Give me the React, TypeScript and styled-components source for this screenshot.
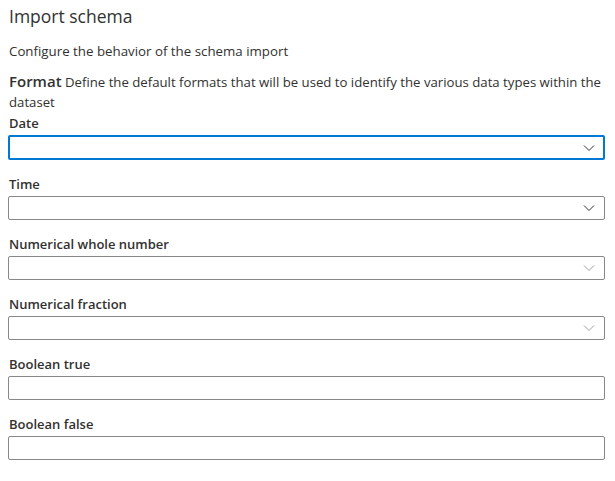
import styled, { createGlobalStyle } from "styled-components";

const GlobalStyle = createGlobalStyle`
  body {
    margin: 0;
    background: #ffffff;
    font-family: "Segoe UI", "Open Sans", "Noto Sans", sans-serif;
    color: #323130;
  }
`;

const Panel = styled.div`
  width: 615px;
  box-sizing: border-box;
  padding: 2px 10px 20px 8px;
`;

const Title = styled.h1`
  margin: 0 0 11px 1px;
  font-size: 17.5px;
  font-weight: 400;
  line-height: 28px;
  color: #323130;
`;

const Description = styled.p`
  margin: 0 0 10px 1px;
  font-size: 13.3px;
  line-height: 20px;
`;

const FormatText = styled.div`
  margin: 0 0 1px 1px;
  font-size: 13.2px;
  line-height: 20px;
`;

const FormatTitle = styled.span`
  font-size: 15px;
  font-weight: 600;
  line-height: 20px;
`;

const Field = styled.div`
  display: flex;
  flex-direction: column;
  margin-bottom: 14px;
`;

const Label = styled.label`
  font-size: 13px;
  font-weight: 600;
  line-height: 20px;
  margin: 0 0 2px 1px;
  color: #323130;
`;

const Box = styled.div<{ $focused?: boolean }>`
  box-sizing: border-box;
  height: ${(p) => (p.$focused ? "25px" : "24px")};
  display: flex;
  align-items: center;
  justify-content: flex-end;
  border-radius: 2px;
  border: ${(p) => (p.$focused ? "2px solid #0078d4" : "1px solid #8a8886")};
  padding-right: ${(p) => (p.$focused ? "8px" : "9px")};
  background: #ffffff;
`;

const Chevron = styled.svg<{ $disabled?: boolean }>`
  width: 12px;
  height: 12px;
  color: ${(p) => (p.$disabled ? "#a19f9d" : "#323130")};
`;

function ChevronDown({ disabled }: { disabled?: boolean }) {
  return (
    <Chevron $disabled={disabled} viewBox="0 0 12 12" fill="none">
      <path d="M1 3.5 L6 8.5 L11 3.5" stroke="currentColor" strokeWidth="1" />
    </Chevron>
  );
}

const fields: { label: string; kind: "select" | "input"; disabled?: boolean }[] = [
  { label: "Time", kind: "select" },
  { label: "Numerical whole number", kind: "select", disabled: true },
  { label: "Numerical fraction", kind: "select", disabled: true },
  { label: "Boolean true", kind: "input" },
  { label: "Boolean false", kind: "input" },
];

export default function App() {
  return (
    <>
      <GlobalStyle />
      <Panel>
        <Title>Import schema</Title>
        <Description>Configure the behavior of the schema import</Description>
        <FormatText>
          <FormatTitle>Format</FormatTitle> Define the default formats that will be used to identify the
          various data types within the dataset
        </FormatText>
        <Field>
          <Label>Date</Label>
          <Box $focused>
            <ChevronDown />
          </Box>
        </Field>
        {fields.map((f) => (
          <Field key={f.label}>
            <Label>{f.label}</Label>
            <Box>{f.kind === "select" && <ChevronDown disabled={f.disabled} />}</Box>
          </Field>
        ))}
      </Panel>
    </>
  );
}
